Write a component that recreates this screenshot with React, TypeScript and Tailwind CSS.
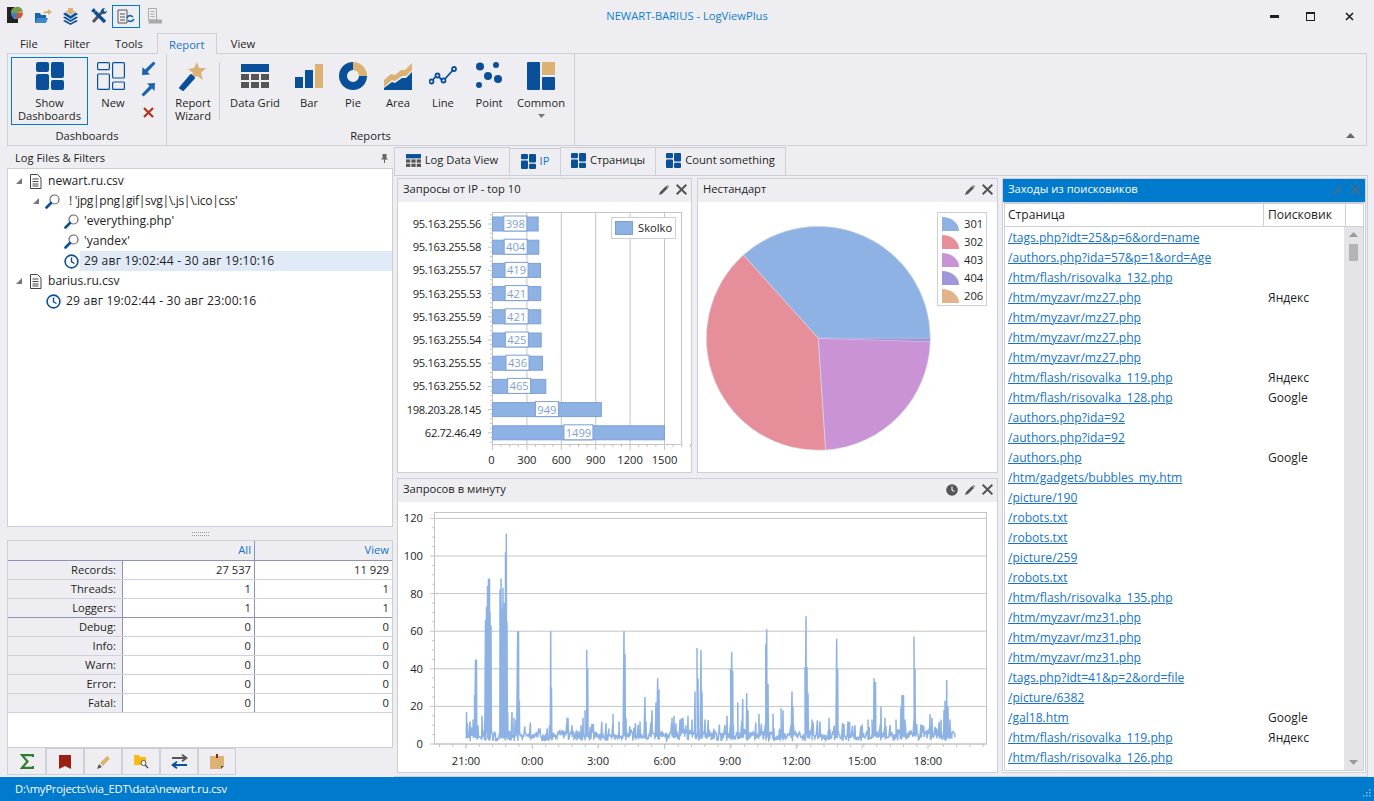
import React from 'react';

const BLUE = '#0a4f99';
const TAN = '#dcb274';
const BAR = '#8db2e3';

// ---------- icons ----------
function DashFilled({ size = 28 }: { size?: number }) {
  return (
    <svg width={size} height={size} viewBox="0 0 28 28" fill={BLUE}>
      <rect x="0" y="0" width="13" height="10" rx="2" />
      <rect x="0" y="12" width="13" height="16" rx="2" />
      <rect x="15" y="0" width="13" height="16" rx="2" />
      <rect x="15" y="18" width="13" height="10" rx="2" />
    </svg>
  );
}

function DashOutline() {
  return (
    <svg width="28" height="28" viewBox="0 0 28 28" fill="none" stroke={BLUE} strokeWidth="1.2" className="-ml-[4px]">
      <rect x="0.6" y="0.6" width="11.8" height="7" rx="1" />
      <rect x="0.6" y="12" width="11.8" height="15.4" rx="1" />
      <rect x="15.6" y="0.6" width="11.8" height="15.4" rx="1" />
      <rect x="15.6" y="20" width="11.8" height="7.4" rx="1" />
    </svg>
  );
}

function GridIcon({ size = 28, height = 24 }: { size?: number; height?: number }) {
  return (
    <svg width={size} height={height} viewBox="0 0 28 24">
      <rect x="0" y="0" width="28" height="8" fill={BLUE} />
      {[0, 10, 20].map((x) => (
        <g key={x} fill="#555">
          <rect x={x} y="10" width="8" height="6" />
          <rect x={x} y="18" width="8" height="6" />
        </g>
      ))}
    </svg>
  );
}

function BarIcon() {
  return (
    <svg width="28" height="28" viewBox="0 0 28 28">
      <rect x="0" y="15" width="8" height="11" fill={BLUE} />
      <rect x="10" y="8" width="8" height="18" fill={BLUE} />
      <rect x="20" y="2" width="8" height="24" fill={TAN} />
    </svg>
  );
}

function PieIcon() {
  return (
    <svg width="28" height="28" viewBox="0 0 28 28" fill="none" strokeWidth="8">
      <circle cx="14" cy="14" r="10" stroke={BLUE} strokeDasharray="47.1 62.8" />
      <path d="M14 4 A10 10 0 0 1 24 14" stroke={TAN} />
    </svg>
  );
}

function AreaIcon() {
  return (
    <svg width="28" height="28" viewBox="0 0 28 28">
      <path d="M0 18 L7 12 L11 13 L17 8 L21 8 L28 1 L28 8 L22 14 L18 14 L11 19 L8 18 L0 25Z" fill={TAN} />
      <path d="M0 28 L0 26 L8 20 L11 21 L18 16 L22 16 L28 10 L28 28Z" fill={BLUE} />
    </svg>
  );
}

function LineIcon() {
  return (
    <svg width="28" height="28" viewBox="0 0 28 28" fill="none" stroke={BLUE} strokeWidth="1.8">
      <path d="M2 20 L8 13 L14 19 L25 7" />
      <circle cx="2.5" cy="19.5" r="2" fill="white" />
      <circle cx="8.5" cy="13.5" r="2" fill="white" />
      <circle cx="14.5" cy="18.5" r="2" fill="white" />
      <circle cx="25" cy="7" r="2" fill="white" />
    </svg>
  );
}

function PointIcon() {
  return (
    <svg width="28" height="28" viewBox="0 0 28 28" fill={BLUE}>
      <circle cx="5" cy="4.5" r="4" />
      <circle cx="21" cy="3" r="3" />
      <circle cx="13" cy="14" r="4" />
      <circle cx="23" cy="17" r="4" />
      <circle cx="4" cy="23" r="3" />
    </svg>
  );
}

function CommonIcon() {
  return (
    <svg width="28" height="28" viewBox="0 0 28 28">
      <rect x="0" y="0" width="13" height="28" rx="1" fill={BLUE} />
      <rect x="15" y="0" width="13" height="13" fill={TAN} />
      <rect x="15" y="15" width="13" height="13" rx="1" fill={BLUE} />
    </svg>
  );
}

function WandIcon() {
  return (
    <svg width="30" height="30" viewBox="0 0 30 30">
      <path d="M19 1 L21 7 L28 7 L23 12 L25 19 L19 15 L13 18 L15 12 L10 8 L16 7Z" fill={TAN} />
      <path d="M2 27 L13 14 L16 17 L5 29Z" fill={BLUE} stroke={BLUE} strokeLinejoin="round" strokeWidth="2" />
    </svg>
  );
}

function Pencil({ color = '#555' }: { color?: string }) {
  return (
    <svg width="10" height="10" viewBox="0 0 10 10" fill={color}>
      <path d="M0 10 L1 7 L7 1 L9 3 L3 9Z" />
      <path d="M7.6 0.5 L8.2 0 L10 1.8 L9.5 2.4Z" />
    </svg>
  );
}

function CloseX({ color = '#555' }: { color?: string }) {
  return (
    <svg width="11" height="11" viewBox="0 0 11 11" stroke={color} strokeWidth="2" fill="none">
      <path d="M0.7 0.7 L10.3 10.3 M10.3 0.7 L0.7 10.3" />
    </svg>
  );
}

function Caret() {
  return (
    <svg width="6" height="6" viewBox="0 0 6 6" className="shrink-0">
      <path d="M6 0 V6 H0Z" fill="#777" />
    </svg>
  );
}

function DocIcon() {
  return (
    <svg width="13" height="15" viewBox="0 0 13 15" fill="none" stroke="#444" className="shrink-0">
      <path d="M1.5 0.5 H8.5 L12 4 V14.5 H1.5Z" />
      <path d="M3.5 5 H9.5 M3.5 7.5 H9.5 M3.5 10 H9.5 M3.5 12 H9.5" />
    </svg>
  );
}

function Lens() {
  return (
    <svg width="15" height="15" viewBox="0 0 15 15" fill="none" className="shrink-0">
      <circle cx="9.5" cy="5.5" r="4.5" stroke="#666" strokeWidth="1.2" />
      <path d="M6 9 L1.5 13.5" stroke={BLUE} strokeWidth="2.6" strokeLinecap="round" />
    </svg>
  );
}

function Clock() {
  return (
    <svg width="15" height="15" viewBox="0 0 15 15" fill="none" stroke={BLUE} strokeWidth="1.6" className="shrink-0">
      <circle cx="7.5" cy="7.5" r="6.4" />
      <path d="M7.5 3.5 V7.8 L10.5 9.5" strokeWidth="1.4" />
    </svg>
  );
}

function ClockSolid() {
  return (
    <svg width="12" height="12" viewBox="0 0 12 12" className="shrink-0">
      <circle cx="6" cy="6" r="5.8" fill="#555" />
      <path d="M6 2.5 V6.2 L8.5 7.5" stroke="#eeeef2" strokeWidth="1.2" fill="none" />
    </svg>
  );
}

// ---------- ribbon ----------
function RibbonButton({ width, icon, lines, active, arrow }: { width: string; icon: React.ReactNode; lines: string[]; active?: boolean; arrow?: boolean }) {
  return (
    <div
      className={`${width} h-[68px] mt-[3px] flex flex-col items-center pt-[4px] border shrink-0 ${
        active ? 'border-[#007acc]' : 'border-transparent'
      }`}
    >
      <div className="h-[28px] flex items-center justify-center">{icon}</div>
      <div className="mt-[6px] text-center leading-[13px]">
        {lines.map((l) => (
          <div key={l}>{l}</div>
        ))}
      </div>
      {arrow && (
        <svg width="7" height="4" viewBox="0 0 7 4" className="mt-[5px]">
          <path d="M0 0 H7 L3.5 4Z" fill="#777" />
        </svg>
      )}
    </div>
  );
}

function Ribbon() {
  return (
    <div className="mx-[7px] h-[93px] border border-[#ccced8] flex">
      <div className="w-[159px] border-r border-[#ccced8] flex flex-col shrink-0">
        <div className="h-[74px] flex pl-[3px]">
          <RibbonButton width="w-[77px]" active icon={<DashFilled />} lines={['Show', 'Dashboards']} />
          <RibbonButton width="w-[36px] ml-[7px]" icon={<DashOutline />} lines={['New']} />
          <div className="ml-[9px] w-[16px] flex flex-col items-center pt-[7px]">
            <svg width="15" height="15" viewBox="0 0 15 15" fill="#1a64ad">
              <path d="M1 14 L1.5 6 L4 8.5 L12.5 0.5 L14.5 2.5 L6.5 11 L9 13.5Z" />
            </svg>
            <svg width="15" height="15" viewBox="0 0 15 15" fill="#1a64ad" className="mt-[6px]">
              <path d="M14 1 L13.5 9 L11 6.5 L2.5 14.5 L0.5 12.5 L8.5 4 L6 1.5Z" />
            </svg>
            <svg width="11" height="11" viewBox="0 0 11 11" stroke="#b03022" strokeWidth="2.2" fill="none" className="mt-[10px]">
              <path d="M1 1 L10 10 M10 1 L1 10" />
            </svg>
          </div>
        </div>
        <div className="flex-1 text-center pt-[3px]">Dashboards</div>
      </div>
      <div className="w-[408px] border-r border-[#ccced8] flex flex-col shrink-0">
        <div className="h-[74px] flex">
          <RibbonButton width="w-[52px]" icon={<WandIcon />} lines={['Report', 'Wizard']} />
          <div className="w-px h-[58px] mt-[8px] bg-[#ccced8] shrink-0" />
          <RibbonButton width="w-[70px]" icon={<GridIcon />} lines={['Data Grid']} />
          <RibbonButton width="w-[38px]" icon={<BarIcon />} lines={['Bar']} />
          <RibbonButton width="w-[50px]" icon={<PieIcon />} lines={['Pie']} />
          <RibbonButton width="w-[40px]" icon={<AreaIcon />} lines={['Area']} />
          <RibbonButton width="w-[50px]" icon={<LineIcon />} lines={['Line']} />
          <RibbonButton width="w-[42px]" icon={<PointIcon />} lines={['Point']} />
          <RibbonButton width="w-[62px]" icon={<CommonIcon />} lines={['Common']} arrow />
        </div>
        <div className="flex-1 text-center pt-[3px]">Reports</div>
      </div>
      <div className="flex-1 flex justify-end items-end pr-[11px] pb-[7px]">
        <svg width="9" height="5" viewBox="0 0 9 5">
          <path d="M4.5 0 L9 5 H0Z" fill="#666" />
        </svg>
      </div>
    </div>
  );
}

// ---------- panels ----------
function Panel({
  title,
  className,
  active,
  clock,
  children,
}: {
  title: string;
  className: string;
  active?: boolean;
  clock?: boolean;
  children: React.ReactNode;
}) {
  return (
    <div className={`${className} border border-[#ccced8] flex flex-col bg-white`}>
      <div
        className={`h-[23px] shrink-0 flex items-center pl-[5px] pr-[4px] pb-[2px] gap-[7px] ${
          active ? 'bg-[#007acc] text-white' : 'bg-[#eeeef2]'
        }`}
      >
        <span className="flex-1">{title}</span>
        {clock && <ClockSolid />}
        <Pencil color={active ? '#3d6f96' : '#555'} />
        <CloseX color={active ? '#3d6f96' : '#555'} />
      </div>
      {children}
    </div>
  );
}

const ipRows: [string, number][] = [
  ['95.163.255.56', 398],
  ['95.163.255.58', 404],
  ['95.163.255.57', 419],
  ['95.163.255.53', 421],
  ['95.163.255.59', 421],
  ['95.163.255.54', 425],
  ['95.163.255.55', 436],
  ['95.163.255.52', 465],
  ['198.203.28.145', 949],
  ['62.72.46.49', 1499],
];

function BarChart() {
  const ox = 492.5;
  const k = 34.4 / 300;
  return (
    <svg viewBox="398 202 293 270" className="w-[293px] h-[270px] block text-[11.2px]" fill="#1e1e1e">
      <rect x={ox} y="212.5" width="189" height="232" fill="none" stroke="#c4c4c4" />
      {[300, 600, 900, 1200, 1500].map((v) => (
        <line key={v} x1={ox + v * k} x2={ox + v * k} y1="212" y2="444" stroke="#c4c4c4" />
      ))}
      {ipRows.map(([ip, v], i) => {
        const y = 224 + i * 23.2;
        const w = v * k;
        const bw = v >= 1000 ? 29 : 23;
        return (
          <g key={ip + i}>
            <text x="481" y={y + 4} textAnchor="end" className="tracking-[-0.35px]">{ip}</text>
            <rect x={ox} y={y - 7} width={w} height="14" fill={BAR} stroke="#7c9fd6" />
            <rect x={ox + w / 2 - bw / 2} y={y - 8} width={bw} height="15" fill="white" stroke="#7c9fd6" />
            <text x={ox + w / 2} y={y + 4} textAnchor="middle" fill="#7f9fd0">{v}</text>
            <line x1="488" x2={ox} y1={y} y2={y} stroke="#c4c4c4" />
            {[-9.3, -4.6, 4.6, 9.3].map((d) => (
              <line key={d} x1="490" x2={ox} y1={y + d} y2={y + d} stroke="#c4c4c4" />
            ))}
          </g>
        );
      })}
      {[0, 300, 600, 900, 1200, 1500].map((v) => (
        <g key={v}>
          <line x1={ox + v * k} x2={ox + v * k} y1="444" y2="450" stroke="#c4c4c4" />
          <text x={ox + v * k - (v === 0 ? 1 : 0)} y="464" textAnchor="middle">{v}</text>
          {[0.25, 0.5, 0.75].map((f) => (
            <line key={f} x1={ox + (v + f * 300) * k} x2={ox + (v + f * 300) * k} y1="444" y2="447" stroke="#c4c4c4" />
          ))}
        </g>
      ))}
      <rect x="611.5" y="217.5" width="64" height="21" fill="white" stroke="#ccced8" />
      <rect x="615.5" y="221.5" width="17" height="13" fill={BAR} stroke="#7c9fd6" />
      <text x="638" y="232">Skolko</text>
    </svg>
  );
}

function slice(a1: number, a2: number) {
  const cx = 818.3;
  const cy = 338.3;
  const r = 112;
  const p = (a: number) => `${cx + r * Math.cos(a)} ${cy + r * Math.sin(a)}`;
  const large = Math.abs(a2 - a1) > Math.PI ? 1 : 0;
  return `M${cx} ${cy} L${p(a1)} A${r} ${r} 0 ${large} 0 ${p(a2)}Z`;
}

function PieChart() {
  const a0 = 0;
  const a1 = Math.atan2(255.7 - 338.3, 744 - 818.3);
  const a2 = Math.atan2(450 - 338.3, 825.7 - 818.3);
  const a3 = Math.atan2(3.3, 112);
  const legend: [string, string][] = [
    ['301', '#8db2e3'],
    ['302', '#e68f9a'],
    ['403', '#c993d6'],
    ['404', '#a097da'],
    ['206', '#e2b48b'],
  ];
  return (
    <svg viewBox="698 202 299 270" className="w-[299px] h-[270px] block text-[11.2px]" fill="#1e1e1e">
      <path d={slice(a0, a1)} fill="#8db2e3" stroke="#d9dbe6" strokeWidth="0.6" />
      <path d={slice(a1, a2 - 2 * Math.PI)} fill="#e68f9a" stroke="#d9dbe6" strokeWidth="0.6" />
      <path d={slice(a2, a3)} fill="#c993d6" stroke="#d9dbe6" strokeWidth="0.6" />
      <path d={slice(a3, a0)} fill="#a097da" />
      <rect x="937.5" y="212.5" width="49" height="93" fill="white" stroke="#ccced8" />
      {legend.map(([name, color], i) => {
        const y = 217 + i * 18;
        return (
          <g key={name}>
            <path d={`M942 ${y} A17 14 0 0 1 959 ${y + 14} H942Z`} fill={color} />
            <text x="964" y={y + 11}>{name}</text>
          </g>
        );
      })}
    </svg>
  );
}

const peaks: [number, number][] = [
  [466.5, 17], [470, 12], [473, 13], [474.5, 26], [475.5, 45], [476.5, 45], [478, 10], [482, 15], [484.5, 12],
  [485.5, 66], [486.5, 73], [487.5, 84], [488.5, 88], [489.5, 88], [490, 70], [491, 63], [500, 82], [501, 88], [502, 72], [503, 83], [504, 75], [505, 74], [505.5, 102], [506.3, 112], [507, 65], [507.7, 17],
  [512, 17], [514, 14], [516, 13], [517.7, 60], [518.5, 60], [519.3, 23], [550.7, 60], [551.5, 30], [549.5, 10], [567, 14], [568, 14], [572, 10],
  [581, 10], [583, 14], [585, 18], [586.7, 50], [587.7, 40], [590, 9], [613, 16], [619, 12], [624, 60], [625, 48], [626, 14],
  [640, 12], [645, 25], [646, 12], [652, 18], [656, 22], [657.7, 35], [659, 29], [672, 14], [674, 15], [680, 13], [688, 15], [692, 13], [695, 28],
  [697, 51], [698, 35], [701, 50], [702, 28], [705, 13], [727, 15], [730.6, 40], [731.7, 49], [732.7, 39], [737.7, 22], [742.7, 24], [746.7, 27], [748, 18],
  [759, 16], [765.7, 53], [766.7, 61], [768, 32], [773, 16], [781, 19], [783, 18], [792, 28], [793, 20], [805, 41], [806, 68], [807, 41], [808, 27],
  [812, 13], [820, 12], [829, 14], [836.7, 56], [837.7, 40], [848, 12], [855, 10], [868, 13], [872, 13], [874, 35], [875.5, 33], [881, 20], [885, 14], [896, 13], [901, 20], [902, 26], [903.5, 26], [905, 13], [914, 57], [915, 40],
  [930, 16], [932, 14], [941, 13], [944, 18], [945, 23], [946.7, 34], [948, 20], [950, 13],
];

function linePoints() {
  let seed = 17;
  const rnd = () => {
    seed = (seed * 16807) % 2147483647;
    return seed / 2147483647;
  };
  const yOf = (v: number) => 744 - v * 1.88;
  const samples: [number, number][] = [...peaks];
  for (let x = 466; x < 955; x += 1.4) {
    samples.push([x, 3 + rnd() * rnd() * 12]);
  }
  samples.sort((a, b) => a[0] - b[0]);
  const pts: string[] = [];
  samples.forEach(([x, v]) => {
    pts.push(`${x.toFixed(1)},${yOf(v).toFixed(1)}`);
    pts.push(`${(x + 0.3).toFixed(1)},${yOf(1.5 + rnd() * 5).toFixed(1)}`);
  });
  return pts.join(' ');
}

function LineChart() {
  const yTicks = [0, 20, 40, 60, 80, 100, 120];
  const xTicks: [string, number][] = [
    ['21:00', 466], ['0:00', 532.3], ['3:00', 598], ['6:00', 664.5], ['9:00', 730], ['12:00', 796.3], ['15:00', 862], ['18:00', 928],
  ];
  return (
    <svg viewBox="398 502 599 270" className="w-[599px] h-[270px] block text-[11.2px]" fill="#1e1e1e">
      <rect x="434.5" y="512.5" width="552" height="231.5" fill="none" stroke="#c4c4c4" />
      {yTicks.map((v) => {
        const y = 744 - v * 1.88;
        return (
          <g key={v}>
            <line x1="430" x2="987" y1={y} y2={y} stroke="#c4c4c4" />
            <text x="423" y={y + 4} textAnchor="end">{v}</text>
            {v < 120 &&
              [0.25, 0.5, 0.75].map((f) => (
                <line key={f} x1="432" x2="434" y1={y - f * 37.6} y2={y - f * 37.6} stroke="#c4c4c4" />
              ))}
          </g>
        );
      })}
      {xTicks.map(([t, x]) => (
        <g key={t}>
          <line x1={x} x2={x} y1="744" y2="749" stroke="#c4c4c4" />
          <text x={x} y="765" textAnchor="middle">{t}</text>
        </g>
      ))}
      {Array.from({ length: 42 }).map((_, i) => {
        const x = 439.5 + i * 13.26;
        return x < 985 ? <line key={i} x1={x} x2={x} y1="744" y2="747" stroke="#c4c4c4" /> : null;
      })}
      <polyline points={linePoints()} fill="none" stroke={BAR} strokeWidth="1.5" />
    </svg>
  );
}

const links: [string, string?][] = [
  ['/tags.php?idt=25&p=6&ord=name'],
  ['/authors.php?ida=57&p=1&ord=Age'],
  ['/htm/flash/risovalka_132.php'],
  ['/htm/myzavr/mz27.php', 'Яндекс'],
  ['/htm/myzavr/mz27.php'],
  ['/htm/myzavr/mz27.php'],
  ['/htm/myzavr/mz27.php'],
  ['/htm/flash/risovalka_119.php', 'Яндекс'],
  ['/htm/flash/risovalka_128.php', 'Google'],
  ['/authors.php?ida=92'],
  ['/authors.php?ida=92'],
  ['/authors.php', 'Google'],
  ['/htm/gadgets/bubbles_my.htm'],
  ['/picture/190'],
  ['/robots.txt'],
  ['/robots.txt'],
  ['/picture/259'],
  ['/robots.txt'],
  ['/htm/flash/risovalka_135.php'],
  ['/htm/myzavr/mz31.php'],
  ['/htm/myzavr/mz31.php'],
  ['/htm/myzavr/mz31.php'],
  ['/tags.php?idt=41&p=2&ord=file'],
  ['/picture/6382'],
  ['/gal18.htm', 'Google'],
  ['/htm/flash/risovalka_119.php', 'Яндекс'],
  ['/htm/flash/risovalka_126.php'],
];

function SearchList() {
  return (
    <div className="flex-1 mx-px mb-px border border-t-[2px] border-[#ccced8] flex flex-col overflow-hidden text-[12.1px]">
      <div className="h-[23px] shrink-0 flex border-b border-[#ccced8] items-center">
        <div className="w-[259px] pl-[3px] h-full flex items-center border-r border-[#ccced8]">Страница</div>
        <div className="w-[82px] pl-[4px] h-full flex items-center border-r border-[#ccced8]">Поисковик</div>
      </div>
      <div className="flex-1 flex overflow-hidden">
        <div className="w-[341px] pt-[1px]">
          {links.map(([href, engine], i) => (
            <div key={i} className="h-[20px] flex items-center">
              <a className="w-[259px] pl-[3px] text-[#1573c9] underline">{href}</a>
              {engine && <span className="pl-[4px]">{engine}</span>}
            </div>
          ))}
        </div>
        <div className="w-[19px] bg-[#e4e4e8] flex flex-col items-center pt-[5px] pb-[5px]">
          <svg width="9" height="5" viewBox="0 0 9 5">
            <path d="M4.5 0 L9 5 H0Z" fill="#999" />
          </svg>
          <div className="w-[9px] h-[17px] mt-[7px] bg-[#b4b4b8]" />
          <svg width="9" height="5" viewBox="0 0 9 5" className="mt-auto">
            <path d="M4.5 5 L9 0 H0Z" fill="#999" />
          </svg>
        </div>
      </div>
    </div>
  );
}

// ---------- left column ----------
const stats: [string, string, string][] = [
  ['Records:', '27 537', '11 929'],
  ['Threads:', '1', '1'],
  ['Loggers:', '1', '1'],
  ['Debug:', '0', '0'],
  ['Info:', '0', '0'],
  ['Warn:', '0', '0'],
  ['Error:', '0', '0'],
  ['Fatal:', '0', '0'],
];

function TreeRow({ indent, children }: { indent: string; children: React.ReactNode }) {
  return <div className={`h-[20px] flex items-center ${indent}`}>{children}</div>;
}

function BottomTab({ width, active, children }: { width: string; active?: boolean; children: React.ReactNode }) {
  return (
    <div
      className={`${width} flex items-center justify-center border-l border-b border-r border-[#ccced8] bg-[#eeeef2] ${
        active ? 'border-t-0' : 'border-t'
      }`}
    >
      {children}
    </div>
  );
}

function LeftPane() {
  return (
    <div className="w-[386px] ml-[7px] mb-[2px] flex flex-col shrink-0">
      <div className="h-[22px] shrink-0 flex items-center pl-[8px] pr-[5px] justify-between pt-[2px]">
        <span>Log Files &amp; Filters</span>
        <svg width="7" height="9" viewBox="0 0 7 9" fill="#666">
          <path d="M1.5 0 H5.5 V4 L7 5.5 H4 V9 H3 V5.5 H0 L1.5 4Z" />
        </svg>
      </div>
      <div className="h-[359px] shrink-0 bg-white border border-[#ccced8] pt-[2px] text-[12.1px]">
        <TreeRow indent="pl-[8px] gap-[7px]">
          <Caret />
          <DocIcon />
          <span className="-ml-px">newart.ru.csv</span>
        </TreeRow>
        <TreeRow indent="pl-[25px] gap-[6px]">
          <Caret />
          <Lens />
          <span className="ml-[3px] tracking-[-0.33px]">! 'jpg|png|gif|svg|\.js|\.ico|css'</span>
        </TreeRow>
        <TreeRow indent="pl-[56px] gap-[5px]">
          <Lens />
          <span>'everything.php'</span>
        </TreeRow>
        <TreeRow indent="pl-[56px] gap-[5px]">
          <Lens />
          <span>'yandex'</span>
        </TreeRow>
        <TreeRow indent="pl-[56px]">
          <Clock />
          <span className="ml-[1px] pl-[4px] flex-1 h-full flex items-center bg-[#e1ebf8] tracking-[0.2px]">29 авг 19:02:44 - 30 авг 19:10:16</span>
        </TreeRow>
        <TreeRow indent="pl-[8px] gap-[7px]">
          <Caret />
          <DocIcon />
          <span className="-ml-px">barius.ru.csv</span>
        </TreeRow>
        <TreeRow indent="pl-[38px] gap-[5px]">
          <Clock />
          <span className="tracking-[0.2px]">29 авг 19:02:44 - 30 авг 23:00:16</span>
        </TreeRow>
      </div>
      <div className="h-[13px] shrink-0 flex items-center justify-center">
        <div className="w-[17px] h-[4px] border-y border-dotted border-[#999]" />
      </div>
      <div className="flex-1 flex flex-col border-x border-[#ccced8] bg-white">
        <div className="h-[21px] shrink-0 flex bg-[#eeeef2] border-y border-y-[#ccced8] border-b-[#8e92b5] text-[#1573c9]">
          <div className="w-[247px] text-right pr-[3px] border-r border-[#8e92b5] leading-[17px]">All</div>
          <div className="flex-1 text-right pr-[3px] leading-[17px]">View</div>
        </div>
        {stats.map(([label, all, view], i) => (
          <div key={label} className={`h-[19px] shrink-0 flex border-b ${i === 2 ? 'border-[#8e92b5]' : 'border-[#cfd0dc]'}`}>
            <div className="w-[115px] bg-[#eeeef2] text-right pr-[6px] border-r border-[#8e92b5] leading-[18px]">{label}</div>
            <div className="w-[132px] text-right pr-[3px] border-r border-[#8e92b5] leading-[18px]">{all}</div>
            <div className="flex-1 text-right pr-[3px] leading-[18px]">{view}</div>
          </div>
        ))}
        <div className="flex-1 border-b border-[#ccced8]" />
      </div>
      <div className="h-[27px] shrink-0 flex">
        <BottomTab width="w-[39px]" active>
          <svg width="14" height="15" viewBox="0 0 14 15" fill="none" stroke="#2e7d32" strokeWidth="2.2">
            <path d="M13 3 V1.2 H2 L7.5 7.5 L2 13.8 H13 V12" />
          </svg>
        </BottomTab>
        <BottomTab width="w-[38px]">
          <svg width="12" height="14" viewBox="0 0 12 14">
            <path d="M0 0 H12 V14 L6 11 L0 14Z" fill="#9b2010" />
          </svg>
        </BottomTab>
        <BottomTab width="w-[38px]">
          <svg width="15" height="15" viewBox="0 0 15 15">
            <path d="M4 9 L11 2 L14 4.5 L7 12Z" fill={TAN} />
            <path d="M3 10 L6 13 L1 15Z" fill="#555" />
          </svg>
        </BottomTab>
        <BottomTab width="w-[38px]">
          <svg width="15" height="15" viewBox="0 0 15 15">
            <path d="M0 1 H5 L6 3 H12 V11 H0Z" fill="#fdb813" />
            <circle cx="9.5" cy="9" r="2.5" fill="white" stroke="#555" />
            <path d="M11.3 11 L14 14" stroke="#555" strokeWidth="1.5" />
          </svg>
        </BottomTab>
        <BottomTab width="w-[38px]">
          <svg width="17" height="15" viewBox="0 0 17 15" fill="none" strokeWidth="1.8">
            <path d="M1 4 H15 M11 0.8 L15.5 4 L11 7.2" stroke="#555" />
            <path d="M16 11 H2 M6 7.8 L1.5 11 L6 14.2" stroke={BLUE} />
          </svg>
        </BottomTab>
        <BottomTab width="w-[38px]">
          <svg width="14" height="15" viewBox="0 0 14 15">
            <path d="M0 2 H14 V12 L11 15 H0Z" fill={TAN} />
            <rect x="6" y="0" width="2" height="4" fill="#9b2010" />
            <path d="M14 12 L11 15 V12Z" fill="#555" />
          </svg>
        </BottomTab>
      </div>
    </div>
  );
}

function DocTab({ width, icon, label, active }: { width: string; icon: React.ReactNode; label: string; active?: boolean }) {
  return (
    <div
      className={`${width} h-[29px] flex items-center justify-center gap-[4px] pb-[2px] border border-[#ccced8] -mr-px ${
        active ? 'border-b-transparent text-[#1573c9] relative top-px' : ''
      }`}
    >
      {icon}
      <span>{label}</span>
    </div>
  );
}

export default function App() {
  return (
    <div className="w-[1374px] h-[801px] bg-[#eeeef2] text-[#1e1e1e] font-['Open_Sans',sans-serif] text-[11.2px] flex flex-col overflow-hidden">
      {/* title bar */}
      <div className="h-[32px] shrink-0 grid grid-cols-[1fr_auto_1fr] items-center">
        <div className="flex items-center pl-[6px]">
          <svg width="18" height="18" viewBox="0 0 18 18" className="mt-[-2px]">
            <path d="M1 1 H8 V17 H1Z" fill="#222" />
            <path d="M6 17 C6 13 9 12 12 13 L12 17Z" fill="#222" />
            <circle cx="11" cy="7" r="6" fill="#d2553a" />
            <path d="M5 7 A6 6 0 0 1 16.5 4.5 L11 7Z" fill="#6fa04f" />
            <path d="M16.5 4.5 A6 6 0 0 1 17 7 L11 7Z" fill="#e8a33d" />
            <path d="M5 7 A6 6 0 0 0 11 13 L11 7Z" fill="#3f7fbf" />
          </svg>
          <svg width="18" height="16" viewBox="0 0 18 16" className="ml-[10px]">
            <path d="M1 5 H6 L7 7 H12 V15 H1Z" fill="#1a64ad" />
            <path d="M3 10 H14 L12 15 H1Z" fill="#3f88c9" />
            <path d="M9 6 C10 3 12 3 14 3 V1 L18 4 L14 7 V5 C12 5 11 5 9 6Z" fill={TAN} />
          </svg>
          <svg width="15" height="17" viewBox="0 0 15 17" fill={BLUE} className="ml-[11px]">
            <path d="M5 0 H10 V3 H13 L7.5 7 L2 3 H5Z" fill={TAN} />
            <path d="M0 6 L2.5 4.5 L7.5 8 L12.5 4.5 L15 6 L7.5 11Z" />
            <path d="M0 9.5 L2 8.5 L7.5 12 L13 8.5 L15 9.5 L7.5 14Z" />
            <path d="M0 13 L2 12 L7.5 15.3 L13 12 L15 13 L7.5 17Z" />
          </svg>
          <svg width="16" height="16" viewBox="0 0 16 16" className="ml-[13px]">
            <path d="M2 14 L12 3" stroke="#555" strokeWidth="3" />
            <path d="M14 14 L4 4" stroke={BLUE} strokeWidth="3.4" />
            <path d="M0 3 L3 0 L5 3 L3 5Z" fill={BLUE} />
            <path d="M10 3 C10 1 12 0 14 0 L12.5 2.5 L14 4 L16 2.5 C16 5 14 6 12 6Z" fill={BLUE} />
          </svg>
          <div className="w-[28px] h-[23px] ml-[5px] border border-[#007acc] flex items-center justify-center">
            <svg width="18" height="15" viewBox="0 0 18 15" fill="none">
              <path d="M1 1 H10 V14 H1Z M3 5 H8 M3 8 H8 M3 11 H8" stroke="#555" />
              <path d="M10 9 C11 6 14 6 16 8 M17 10 C15 13 12 13 11 11" stroke="#1a64ad" strokeWidth="1.6" />
            </svg>
          </div>
          <svg width="15" height="16" viewBox="0 0 15 16" fill="none" stroke="#aaa" className="ml-[7px]">
            <path d="M1.5 0.5 H9.5 V12 H1.5Z M3.5 3.5 H7.5 M3.5 6 H7.5 M3.5 8.5 H7.5" />
            <rect x="2" y="12" width="13" height="3" fill="#aaa" />
          </svg>
        </div>
        <div className="text-[#0e7fd0]">NEWART-BARIUS - LogViewPlus</div>
        <div className="flex justify-end items-center pr-[18px] gap-[28px]">
          <div className="w-[9px] h-[3px] mt-[1px] -mr-px bg-[#1e1e1e]" />
          <div className="w-[9px] h-[9px] border border-t-2 border-[#1e1e1e] mr-[1px]" />
          <svg width="9" height="9" viewBox="0 0 9 9" stroke="#1e1e1e" strokeWidth="1.6" className="ml-[1px] mr-[2px]">
            <path d="M1 1 L8 8 M8 1 L1 8" />
          </svg>
        </div>
      </div>
      {/* ribbon tabs */}
      <div className="h-[21px] shrink-0 flex items-end relative top-px pl-[20px]">
        <span className="h-[20px] leading-[20px]">File</span>
        <span className="h-[20px] leading-[20px] ml-[26px]">Filter</span>
        <span className="h-[20px] leading-[20px] ml-[25px]">Tools</span>
        <span className="h-[21px] w-[60px] ml-[14px] text-center leading-[21px] text-[#1573c9] border border-b-0 border-[#ccced8] bg-[#eeeef2]">Report</span>
        <span className="h-[20px] leading-[20px] ml-[14px]">View</span>
      </div>
      <Ribbon />
      {/* body */}
      <div className="flex-1 flex min-h-0">
        <LeftPane />
        <div className="ml-px w-[974px] flex flex-col shrink-0 pt-px">
          <div className="h-[29px] shrink-0 flex border-b border-[#ccced8]">
            <DocTab width="w-[116px]" icon={<GridIcon size={15} height={13} />} label="Log Data View" />
            <DocTab width="w-[52px]" active icon={<DashFilled size={15} />} label="IP" />
            <DocTab width="w-[96px]" icon={<DashFilled size={15} />} label="Страницы" />
            <DocTab width="w-[131px]" icon={<DashFilled size={15} />} label="Count something" />
          </div>
          <div className="flex-1 flex pl-[3px] pt-[2px] gap-[4px] border-r border-b border-[#ccced8] pb-[3px] mb-[1px]">
            <div className="w-[601px] flex flex-col gap-[5px] shrink-0">
              <div className="h-[295px] flex gap-[5px] shrink-0">
                <Panel title="Запросы от IP - top 10" className="w-[295px] shrink-0">
                  <BarChart />
                </Panel>
                <Panel title="Нестандарт" className="w-[301px] shrink-0">
                  <PieChart />
                </Panel>
              </div>
              <Panel title="Запросов в минуту" clock className="h-[295px] shrink-0">
                <LineChart />
              </Panel>
            </div>
            <Panel title="Заходы из поисковиков" active className="w-[364px] shrink-0 overflow-hidden">
              <SearchList />
            </Panel>
          </div>
        </div>
      </div>
      {/* status bar */}
      <div className="h-[24px] shrink-0 bg-[#007acc] text-white flex items-center justify-between pl-[15px] pr-[3px]">
        <span className="tracking-[-0.17px]">D:\myProjects\via_EDT\data\newart.ru.csv</span>
        <svg width="10" height="10" viewBox="0 0 10 10" fill="#7fbce6" className="self-end mb-[2px]">
          <rect x="8" y="0" width="1.5" height="1.5" />
          <rect x="5" y="3" width="1.5" height="1.5" />
          <rect x="8" y="3" width="1.5" height="1.5" />
          <rect x="2" y="6" width="1.5" height="1.5" />
          <rect x="5" y="6" width="1.5" height="1.5" />
          <rect x="8" y="6" width="1.5" height="1.5" />
        </svg>
      </div>
    </div>
  );
}
